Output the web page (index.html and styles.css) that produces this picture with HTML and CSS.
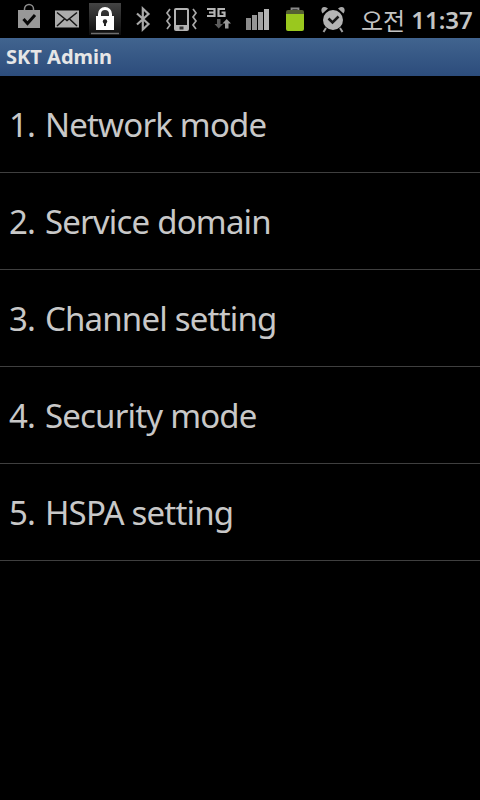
FILE: index.html
```html
<!DOCTYPE html>
<html lang="ko">
<head>
  <meta charset="UTF-8" />
  <meta name="viewport" content="width=device-width, initial-scale=1.0"/>
  <title>SKT Admin</title>
  <link rel="stylesheet" href="styles.css">
</head>
<body>
  <div class="status-bar">
    <!-- market bag -->
    <svg class="icon" viewBox="0 0 38 38">
      <path d="M14.500 11V9a4.500 4.500 0 0 1 9 0v2" fill="none" stroke="#8c8c8c" stroke-width="1.500"/>
      <path d="M8 10H30V28H8Z" fill="#989898"/>
      <path d="M13.500 19L17.500 23.500L25 15" fill="none" stroke="#080808" stroke-width="3"/>
    </svg>
    <!-- mail -->
    <svg class="icon" viewBox="0 0 38 38">
      <path d="M7 10.500H31V27.500H7Z" fill="#ababab"/>
      <path d="M9 12.500L19 20.500L29 12.500M9 26L16.500 19M29 26L21.500 19" fill="none" stroke="#141414" stroke-width="1.500"/>
    </svg>
    <!-- lock, pressed -->
    <svg class="icon" viewBox="0 0 38 38">
      <defs>
        <linearGradient id="lockbg" x1="0" y1="0" x2="0" y2="1">
          <stop offset="0" stop-color="#444"/>
          <stop offset="1" stop-color="#0c0c0c"/>
        </linearGradient>
      </defs>
      <path d="M3 3H35V35H3Z" fill="url(#lockbg)"/>
      <path d="M5 33.500H33" stroke="#6e6e6e" stroke-width="1.500"/>
      <path d="M13.500 17V14a5.500 5.500 0 0 1 11 0v3" fill="none" stroke="#fff" stroke-width="3"/>
      <path d="M10 16H28V30H10Z" fill="#fff"/>
      <circle cx="19" cy="21.500" r="2.200" fill="#222"/>
      <path d="M18 21.500H20V26H18Z" fill="#222"/>
    </svg>
    <!-- bluetooth -->
    <svg class="icon" viewBox="0 0 38 38">
      <path d="M13 13.500L24.500 24L18.800 29.500V8.500L24.500 14L13 24.500" fill="none" stroke="#a8a8a8" stroke-width="2.200"/>
    </svg>
    <!-- vibrate -->
    <svg class="icon" viewBox="0 0 38 38">
      <path d="M14 8H25Q27 8 27 10V29Q27 31 25 31H14Q12 31 12 29V10Q12 8 14 8Z" fill="#b4b4b4"/>
      <path d="M14 10H25V25H14Z" fill="#0a0a0a"/>
      <path d="M17.500 26.500H21.500V29.500H17.500Z" fill="#333"/>
      <path d="M8 9L5 13L8 17L5 21L8 25L5 29M31 9L34 13L31 17L34 21L31 25L34 29" fill="none" stroke="#a8a8a8" stroke-width="1.700"/>
    </svg>
    <!-- 3G data -->
    <svg class="icon" viewBox="0 0 38 38">
      <path d="M7 9H14.500V12.500H9M14.500 12.500V16H7" fill="none" stroke="#b4b4b4" stroke-width="2.200"/>
      <path d="M25 9H18.500V16H24.500V12.500H21.500" fill="none" stroke="#b4b4b4" stroke-width="2.200"/>
      <path d="M17 19H20.500V24H23L18.700 28.500L14.500 24H17Z" fill="#5c5c5c"/>
      <path d="M25 28.500H28.500V23.500H31L26.700 19L22.500 23.500H25Z" fill="#9a9a9a"/>
    </svg>
    <!-- signal -->
    <svg class="icon" viewBox="0 0 38 38">
      <path d="M8 18H13V30H8Z" fill="#8c8c8c"/>
      <path d="M14 15H19V30H14Z" fill="#969696"/>
      <path d="M20 12H25V30H20Z" fill="#a2a2a2"/>
      <path d="M26 9H31V30H26Z" fill="#b4b4b4"/>
    </svg>
    <!-- battery -->
    <svg class="icon" viewBox="0 0 38 38">
      <path d="M15.500 11V8.500H22.500V11" fill="none" stroke="#8a8a8a" stroke-width="1.800"/>
      <path d="M12 10H26Q28 10 28 12V15H10V12Q10 10 12 10Z" fill="#556033"/>
      <path d="M10 14H28V29Q28 31 26 31H12Q10 31 10 29Z" fill="#9ac81e"/>
    </svg>
    <!-- alarm -->
    <svg class="icon" viewBox="0 0 38 38">
      <circle cx="19" cy="20" r="10" fill="#b4b4b4"/>
      <path d="M14.500 18.500L18.500 22.500L24.500 16.500" fill="none" stroke="#161616" stroke-width="2.500"/>
      <path d="M8.500 13.500L14 8.500Q10 6 8 8Q6.500 10.500 8.500 13.500ZM29.500 13.500L24 8.500Q28 6 30 8Q31.500 10.500 29.500 13.500Z" fill="#a8a8a8"/>
      <path d="M12 28L9.500 32M26 28L28.500 32" stroke="#a0a0a0" stroke-width="2"/>
    </svg>
    <div class="clock"><span class="ampm">오전</span><span class="time">11:37</span></div>
  </div>

  <div class="title-bar">SKT Admin</div>

  <ul class="menu">
    <li class="menu-item"><span class="num">1.</span> Network mode</li>
    <li class="menu-item"><span class="num">2.</span> Service domain</li>
    <li class="menu-item"><span class="num">3.</span> Channel setting</li>
    <li class="menu-item"><span class="num">4.</span> Security mode</li>
    <li class="menu-item"><span class="num">5.</span> HSPA setting</li>
  </ul>
</body>
</html>
```

FILE: styles.css
```css
body {
  font-family: 'Noto Sans', 'Noto Sans CJK KR', sans-serif;
  background-color: #000;
  color: #c8c8c8;
  margin: 0;
  height: 800px;
  overflow: hidden;
}

.status-bar {
  display: flex;
  align-items: center;
  height: 38px;
  padding-left: 10px;
}

.icon {
  width: 38px;
  height: 38px;
  flex: none;
}

.clock {
  display: flex;
  align-items: center;
  margin-left: 9px;
  color: #c4c4c4;
}

.ampm {
  font-family: 'Noto Sans CJK KR', sans-serif;
  font-size: 24px;
  margin-right: 6px;
}

.time {
  font-size: 24px;
  font-weight: 600;
}

.title-bar {
  height: 38px;
  line-height: 37px;
  padding-left: 6px;
  background: linear-gradient(#41648f, #2c4c7c);
  color: #e6e6e6;
  font-size: 20px;
  font-weight: bold;
}

.menu {
  list-style: none;
  margin: 0;
  padding: 0;
}

.menu-item {
  box-sizing: border-box;
  height: 97px;
  padding: 26px 0 0 9px;
  border-bottom: 1px solid #3f3f3f;
  font-size: 33px;
  line-height: 45px;
  letter-spacing: -0.8px;
}

.num {
  margin-right: 2px;
}
```
